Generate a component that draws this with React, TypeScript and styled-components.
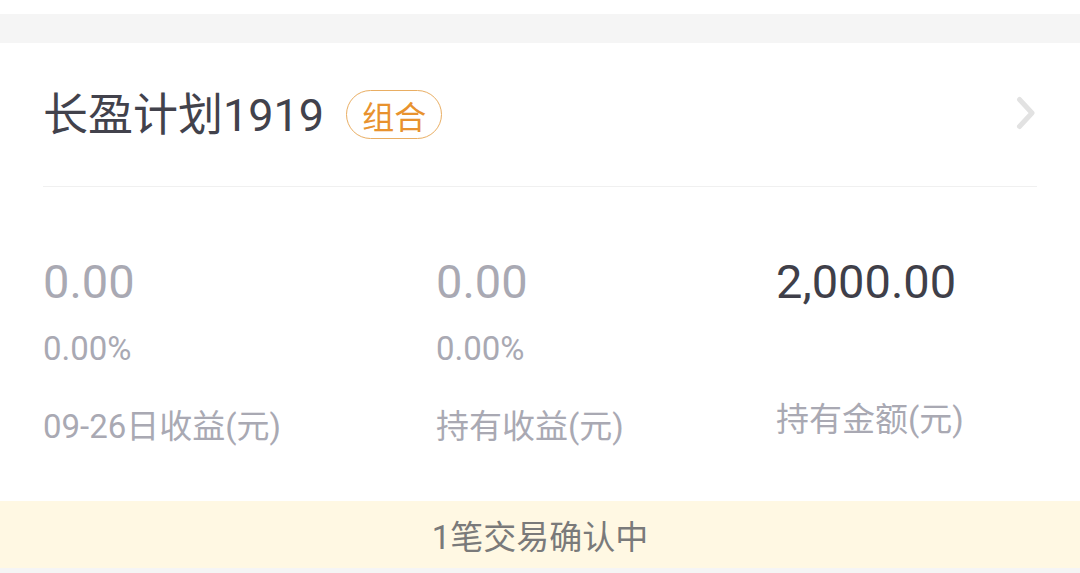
import { createGlobalStyle, styled } from "styled-components";

const GlobalStyle = createGlobalStyle`
  html, body {
    margin: 0;
    padding: 0;
    background: #ffffff;
  }
  body {
    font-family: Roboto, "Noto Sans CJK SC", sans-serif;
  }
`;

const stats = [
  { value: "0.00", percent: "0.00%", label: "09-26日收益(元)", muted: true },
  { value: "0.00", percent: "0.00%", label: "持有收益(元)", muted: true },
  { value: "2,000.00", percent: "", label: "持有金额(元)", muted: false },
];

const App = () => {
  return (
    <Page>
      <GlobalStyle />
      <TopGap />
      <GrayBand />
      <Card>
        <Header>
          <TitleWrap>
            <Title>长盈计划1919</Title>
            <Badge>组合</Badge>
          </TitleWrap>
          <Chevron width="20" height="34" viewBox="0 0 20 34">
            <polyline
              points="3.5,3.5 16,17 3.5,30.5"
              fill="none"
              stroke="#e2e2e2"
              strokeWidth="5"
              strokeLinecap="round"
              strokeLinejoin="round"
            />
          </Chevron>
        </Header>
        <Stats>
          {stats.map((s) => (
            <Stat key={s.label}>
              <Value $muted={s.muted}>{s.value}</Value>
              {s.percent && <Percent>{s.percent}</Percent>}
              <Label $tight={!s.percent}>{s.label}</Label>
            </Stat>
          ))}
        </Stats>
      </Card>
      <Banner>1笔交易确认中</Banner>
      <GrayBand $small />
    </Page>
  );
};

const Page = styled.div`
  width: 1080px;
  height: 573px;
  overflow: hidden;
  background: #ffffff;
`;

const TopGap = styled.div`
  height: 14px;
  background: #ffffff;
`;

const GrayBand = styled.div<{ $small?: boolean }>`
  height: ${(p) => (p.$small ? "5px" : "29px")};
  background: #f5f5f5;
`;

const Card = styled.div`
  background: #ffffff;
  padding: 0 43px;
`;

const Header = styled.div`
  height: 143px;
  display: flex;
  align-items: center;
  justify-content: space-between;
  border-bottom: 1px solid #f0f0f0;
`;

const TitleWrap = styled.div`
  display: flex;
  align-items: center;
  gap: 22px;
`;

const Title = styled.div`
  font-size: 45px;
  line-height: 56px;
  color: #42424c;
  margin-top: 3px;
`;

const Badge = styled.div`
  box-sizing: border-box;
  height: 49px;
  padding: 0 15px;
  display: flex;
  align-items: center;
  border: 1.5px solid #e9ae63;
  border-radius: 25px;
  font-size: 32px;
  color: #e8922e;
`;

const Chevron = styled.svg`
  margin-right: 1px;
  margin-top: -4px;
`;

const Stats = styled.div`
  display: grid;
  grid-template-columns: 393px 340px 1fr;
  padding: 66px 0 52px;
`;

const Stat = styled.div`
  display: flex;
  flex-direction: column;
`;

const Value = styled.div<{ $muted: boolean }>`
  font-size: 47px;
  line-height: 58px;
  color: ${(p) => (p.$muted ? "#a9a9b3" : "#3f3f49")};
`;

const Percent = styled.div`
  font-size: 33px;
  line-height: 40px;
  margin-top: 18px;
  color: #a9a9b3;
`;

const Label = styled.div<{ $tight: boolean }>`
  font-size: 33px;
  line-height: 44px;
  margin-top: ${(p) => (p.$tight ? "87px" : "36px")};
  color: #a9a9b3;
`;

const Banner = styled.div`
  height: 67px;
  display: flex;
  align-items: center;
  justify-content: center;
  background: #fff8e3;
  font-size: 33px;
  color: #7a7a7a;
`;

export default App;
